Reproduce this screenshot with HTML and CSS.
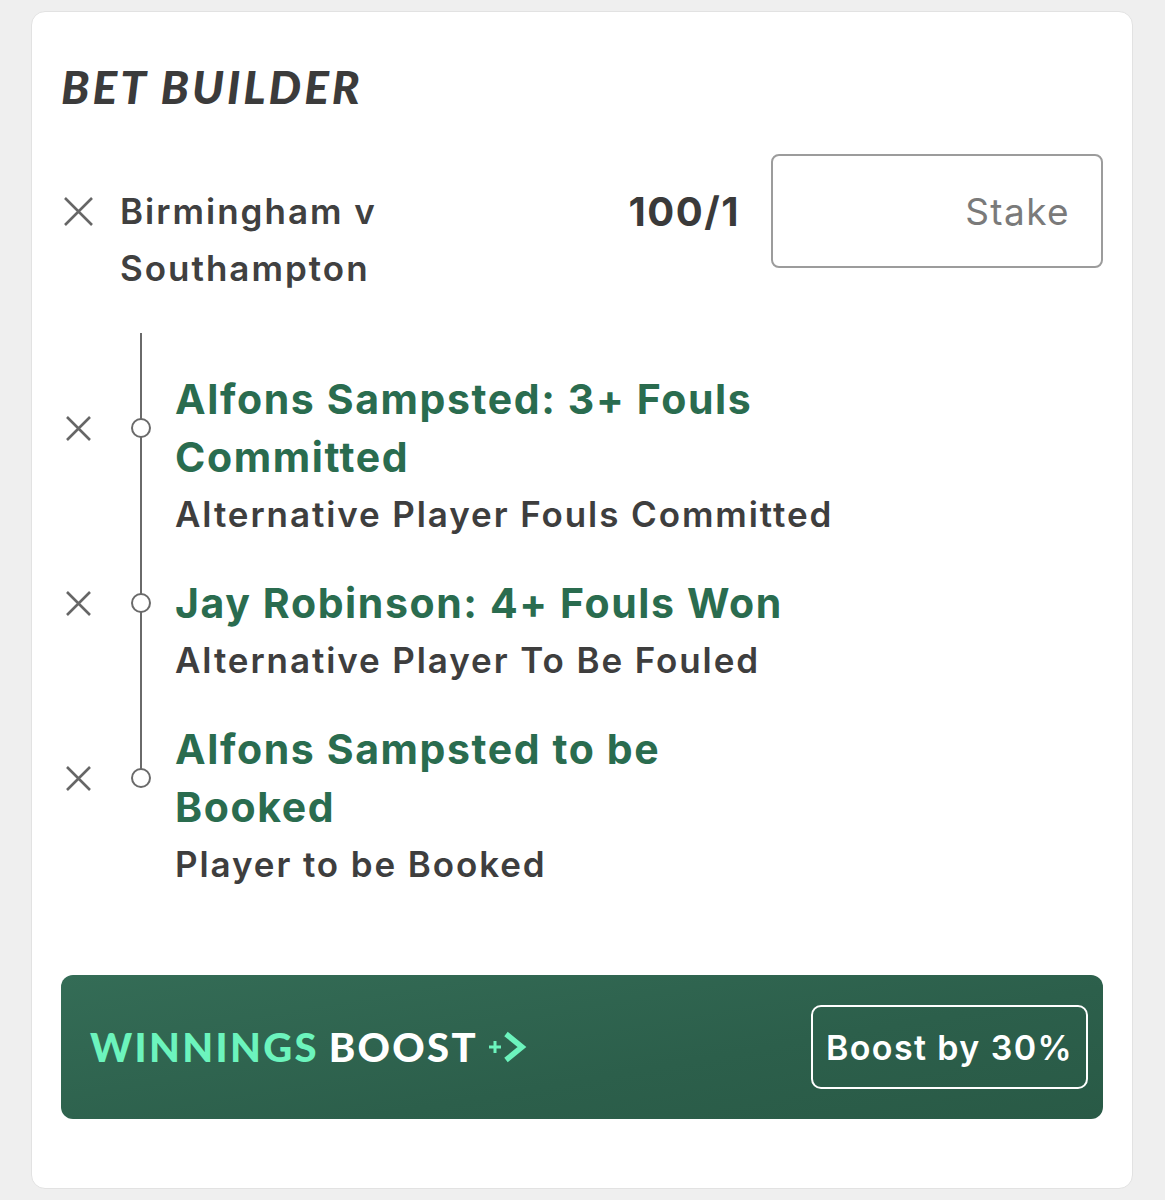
FILE: index.html
```html
<!DOCTYPE html>
<html lang="en">
<head>
<meta charset="utf-8">
<title>Bet Builder</title>
<link rel="stylesheet" href="styles.css">
</head>
<body>
<div class="card">
  <h1 class="title">BET BUILDER</h1>

  <div class="header">
    <div class="match">
      <svg class="x-big" viewBox="0 0 31 31"><path d="M2 2L29 29M29 2L2 29" /></svg>
      <div class="match-name">Birmingham v<br>Southampton</div>
    </div>
    <div class="odds">100/1</div>
    <div class="stake">Stake</div>
  </div>

  <div class="legs">
    <div class="leg">
      <svg class="x-small" viewBox="0 0 27 27"><path d="M2 2L25 25M25 2L2 25" /></svg>
      <span class="node"></span>
      <div class="leg-title">Alfons Sampsted: 3+ Fouls<br>Committed</div>
      <div class="leg-sub">Alternative Player Fouls Committed</div>
    </div>
    <div class="leg">
      <svg class="x-small" viewBox="0 0 27 27"><path d="M2 2L25 25M25 2L2 25" /></svg>
      <span class="node"></span>
      <div class="leg-title">Jay Robinson: 4+ Fouls Won</div>
      <div class="leg-sub">Alternative Player To Be Fouled</div>
    </div>
    <div class="leg">
      <svg class="x-small" viewBox="0 0 27 27"><path d="M2 2L25 25M25 2L2 25" /></svg>
      <span class="node"></span>
      <div class="leg-title">Alfons Sampsted to be<br>Booked</div>
      <div class="leg-sub">Player to be Booked</div>
    </div>
  </div>

  <div class="boost">
    <div class="boost-logo">
      <span class="mint">WINNINGS</span>
      <span class="white">BOOST</span>
      <svg class="boost-icon" viewBox="0 0 40 32"><path class="plus" d="M1 16H13M7 10V22" /><path class="chev" d="M18 3L34 16L18 29" /></svg>
    </div>
    <div class="boost-btn">Boost by 30%</div>
  </div>
</div>
</body>
</html>
```

FILE: styles.css
```css
* { box-sizing: border-box; }

body {
  margin: 0;
  background: #efefef;
  font-family: Inter, "Noto Sans", sans-serif;
  color: #3e3e3e;
}

.card {
  margin: 11px 32px 11px 31px;
  background: #ffffff;
  border: 1px solid #e2e2e2;
  border-radius: 14px;
  padding: 0 29px 70px 29px;
  height: 1178px;
}

.title {
  margin: 47px 0 0 0;
  font-family: Lato, sans-serif;
  font-weight: 900;
  font-style: italic;
  font-size: 46px;
  line-height: 56px;
  letter-spacing: 3px;
  color: #3b3b3b;
}

.header {
  margin-top: 39px;
  display: flex;
  align-items: flex-start;
}

.match {
  flex: 1;
  display: flex;
  align-items: flex-start;
}

.x-big {
  width: 31px;
  height: 31px;
  margin: 42px 26px 0 2px;
  flex: none;
}
.x-big path, .x-small path {
  stroke: #666666;
  stroke-width: 2.6;
  fill: none;
}

.match-name {
  margin-top: 29px;
  font-size: 35px;
  font-weight: 600;
  line-height: 57px;
  letter-spacing: 2px;
  color: #404040;
}

.odds {
  margin-top: 29px;
  margin-right: 31px;
  font-size: 40px;
  font-weight: 700;
  line-height: 57px;
  letter-spacing: 1.5px;
  color: #3a3a3a;
}

.stake {
  width: 332px;
  height: 114px;
  border: 2px solid #9c9c9c;
  border-radius: 8px;
  display: flex;
  align-items: center;
  justify-content: flex-end;
  padding-right: 31px;
  font-size: 37px;
  letter-spacing: 1.4px;
  color: #7a7a7a;
}

.legs {
  margin-top: 36px;
  padding-top: 37px;
  position: relative;
  display: flex;
  flex-direction: column;
  gap: 31px;
}

.legs::before {
  content: "";
  position: absolute;
  left: 79px;
  top: 0;
  width: 2px;
  height: 443px;
  background: #6a6a6a;
}

.leg {
  display: grid;
  grid-template-columns: 56px 48px 1fr;
  align-items: center;
}

.x-small {
  grid-row: 1;
  grid-column: 1;
  width: 27px;
  height: 27px;
  margin-left: 4px;
}

.node {
  grid-row: 1;
  grid-column: 2;
  justify-self: center;
  width: 20px;
  height: 20px;
  border: 2px solid #6a6a6a;
  border-radius: 50%;
  background: #ffffff;
  position: relative;
  z-index: 1;
}

.leg-title {
  grid-row: 1;
  grid-column: 3;
  padding-left: 10px;
  font-size: 41px;
  font-weight: 700;
  line-height: 58px;
  letter-spacing: 1.6px;
  color: #2a6c4f;
}

.leg-sub {
  grid-row: 2;
  grid-column: 3;
  padding-left: 10px;
  font-size: 35px;
  font-weight: 600;
  line-height: 57px;
  letter-spacing: 1.9px;
  color: #3e3e3e;
}

.boost {
  margin-top: 82px;
  height: 144px;
  border-radius: 12px;
  background: linear-gradient(170deg, #346c56 0%, #2c5f4b 60%, #295a46 100%);
  display: flex;
  align-items: center;
  justify-content: space-between;
  padding: 0 15px 0 29px;
}

.boost-logo {
  display: flex;
  align-items: center;
  font-family: Lato, sans-serif;
  font-weight: 900;
  font-size: 40px;
  letter-spacing: 2.3px;
}

.mint { color: #6cf4bd; }
.white { color: #ffffff; margin-left: 10px; }

.boost-icon {
  width: 40px;
  height: 32px;
  margin-left: 10px;
}
.boost-icon .plus {
  stroke: #6cf4bd;
  stroke-width: 3;
  fill: none;
}
.boost-icon .chev {
  stroke: #6cf4bd;
  stroke-width: 5.5;
  fill: none;
}

.boost-btn {
  width: 277px;
  height: 84px;
  border: 2px solid #ffffff;
  border-radius: 10px;
  display: flex;
  align-items: center;
  justify-content: center;
  color: #ffffff;
  font-size: 34px;
  font-weight: 600;
  letter-spacing: 1.4px;
}
```
